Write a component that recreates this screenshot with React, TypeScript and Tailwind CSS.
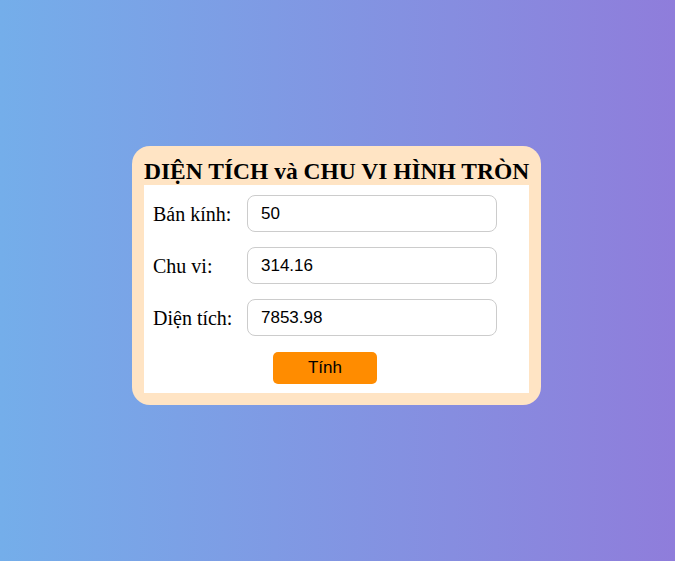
import React from "react";

export default function App() {
  const rows = [
    { label: "Bán kính:", value: "50" },
    { label: "Chu vi:", value: "314.16" },
    { label: "Diện tích:", value: "7853.98" },
  ];
  return (
    <div className="w-[675px] h-[561px] bg-[linear-gradient(to_right,#74aeea,#8f7ddb)] flex justify-start items-start pt-[146px] pl-[132px]">
      <div className="w-[409px] bg-[#ffe4c4] rounded-[18px] p-[12px]">
        <h2
          className="h-[27px] text-center font-bold text-[23.5px] leading-[27px] text-black whitespace-nowrap"
          style={{ fontFamily: '"Liberation Serif", serif' }}
        >
          DIỆN TÍCH và CHU VI HÌNH TRÒN
        </h2>
        <div className="bg-white h-[208px] pt-[10px] pl-[9px] flex flex-col">
          {rows.map((r, i) => (
            <div key={i} className={`flex items-center h-[37px] ${i > 0 ? "mt-[15px]" : ""}`}>
              <span
                className="w-[94px] text-[20px] text-black"
                style={{ fontFamily: '"Liberation Serif", serif' }}
              >
                {r.label}
              </span>
              <input
                readOnly
                value={r.value}
                className="w-[250px] h-[37px] border border-[#cccccc] rounded-[8px] px-[13px] text-[17px] text-black outline-none"
                style={{ fontFamily: '"Liberation Sans", Arial, sans-serif' }}
              />
            </div>
          ))}
          <div className="flex mt-[16px] pl-[120px]">
            <button
              className="w-[104px] h-[32px] bg-[#ff8c00] rounded-[5px] text-[17px] text-black"
              style={{ fontFamily: '"Liberation Sans", Arial, sans-serif' }}
            >
              Tính
            </button>
          </div>
        </div>
      </div>
    </div>
  );
}
